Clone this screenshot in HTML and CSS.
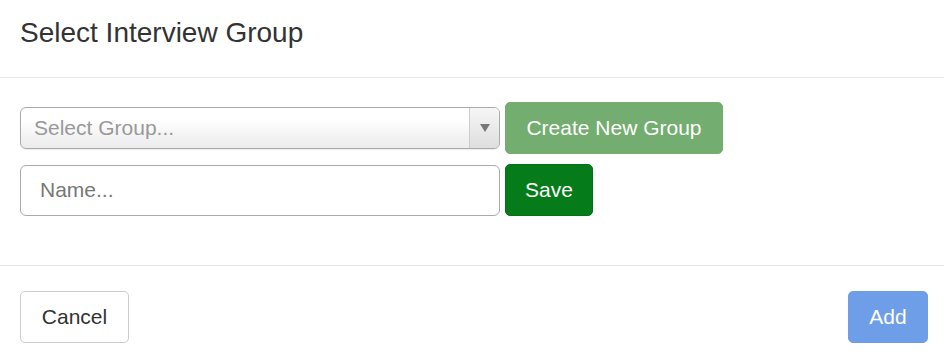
FILE: index.html
```html
<!DOCTYPE html>
<html lang="en">
<head>
  <meta charset="UTF-8" />
  <meta name="viewport" content="width=device-width, initial-scale=1" />
  <title>Select Interview Group</title>
  <link rel="stylesheet" href="styles.css">
</head>
<body>

<div class="modal">
  <div class="modal-header">
    <h4 class="modal-title">Select Interview Group</h4>
  </div>

  <div class="modal-body">
    <div class="row">
      <div class="chosen-single">
        <span class="placeholder">Select Group...</span>
        <div class="chosen-arrow"><span class="tri"></span></div>
      </div>
      <button class="btn btn-create">Create New Group</button>
    </div>
    <div class="row">
      <input class="form-control" type="text" placeholder="Name...">
      <button class="btn btn-save">Save</button>
    </div>
  </div>

  <div class="modal-footer">
    <button class="btn btn-default">Cancel</button>
    <button class="btn btn-add">Add</button>
  </div>
</div>

</body>
</html>
```

FILE: styles.css
```css
* { margin: 0; padding: 0; box-sizing: border-box; }
body { background: #fff; color: #333; font-family: "Liberation Sans", Arial, sans-serif; font-size: 21px; }

.modal { width: 944px; }
.modal-header { height: 78px; padding: 16px 20px 0; border-bottom: 1px solid #e5e5e5; }
.modal-title { font-size: 28px; font-weight: 400; line-height: 34px; color: #333; }

.modal-body { padding: 24px 20px 0; height: 187px; }
.row { display: flex; align-items: center; gap: 5px; margin-bottom: 10px; }

.chosen-single { width: 480px; height: 42px; display: flex; align-items: center; border: 1px solid #aaa; border-radius: 6px; background: linear-gradient(#fff 30%, #f3f3f3 70%, #ececec 100%); box-shadow: 0 1px 1px rgba(0,0,0,0.08); }
.chosen-single .placeholder { flex: 1; padding-left: 13px; color: #999; font-size: 21px; }
.chosen-arrow { width: 30px; height: 100%; border-left: 1px solid #ccc; background: linear-gradient(#f6f6f6, #dedede); border-radius: 0 5px 5px 0; display: flex; align-items: center; justify-content: center; }
.tri { width: 0; height: 0; border-left: 5px solid transparent; border-right: 5px solid transparent; border-top: 8px solid #777; }

.form-control { width: 480px; height: 51px; border: 1px solid #aaa; border-radius: 6px; padding: 0 19px; font: inherit; font-size: 21px; color: #555; }
.form-control::placeholder { color: #777; }

.btn { font: inherit; font-size: 21px; height: 52px; border-radius: 5px; border: 1px solid transparent; padding: 0 10px; cursor: pointer; }
.btn-create { width: 218px; background: #73ad6f; border-color: #73ad6f; color: #fff; }
.btn-save { width: 88px; background: #067b1a; border-color: #05701a; color: #fff; }

.modal-footer { display: flex; justify-content: space-between; padding: 25px 16px 0 20px; border-top: 1px solid #e5e5e5; }
.btn-default { width: 109px; background: #fff; border-color: #ccc; color: #333; }
.btn-add { width: 80px; background: #6e9ee8; border-color: #6e9ee8; color: #fff; }
```
